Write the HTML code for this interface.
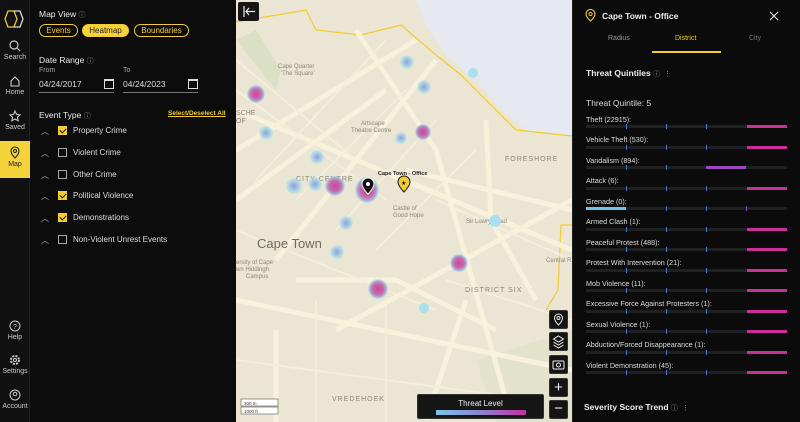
<!DOCTYPE html>
<html><head><meta charset="utf-8"><style>
*{box-sizing:border-box;margin:0;padding:0}
body{width:800px;height:422px;overflow:hidden;background:#0b0b0b;font-family:"Liberation Sans",sans-serif;color:#ddd;position:relative}
.abs{position:absolute}
.nav{left:0;top:0;width:30px;height:422px;background:#111;border-right:1px solid #222}
.ni{position:absolute;left:0;width:30px;text-align:center;font-size:7px;color:#ccc}
.panel{left:30px;top:0;width:206px;height:422px;background:#0c0c0c}
.t{font-size:8.5px;color:#eee}
.pill{position:absolute;top:24px;height:13px;border:1px solid #f2cc30;border-radius:7px;font-size:8px;color:#f2cc30;text-align:center;line-height:11px}
.cb{position:absolute;width:9px;height:9px;border:1px solid #aaa;left:58px}
.cb.on{background:#f2cc30;border-color:#f2cc30}
.cb.on:after{content:"";position:absolute;left:2px;top:0px;width:3px;height:5px;border:solid #111;border-width:0 1px 1px 0;transform:rotate(45deg)}
.car{position:absolute;left:41px;font-size:8px;color:#bbb}
.el{position:absolute;left:73px;font-size:8px;color:#ddd}
.right{left:572px;top:0;width:228px;height:422px;background:#0b0b0b;border-left:1px solid #222}
.lab{position:absolute;left:586px;font-size:7.2px;color:#ddd}
.bar{position:absolute;left:586px;width:201px;height:3px;background:#1e2124}
.bar i{position:absolute;top:-1px;width:1px;height:5px;background:#4a78c8}
.bar b{position:absolute;top:0;height:3px;left:161px;width:40px;background:#cc2f9a}
.ctl{position:absolute;left:549px;width:19px;height:19px;background:#141414;border-radius:2px;border:1px solid #333}
</style></head><body>
<div class="abs nav">
 <svg class="abs" style="left:4px;top:10px" width="22" height="18" viewBox="0 0 22 18"><path d="M4 1h6l3 8-3 8H4L1 9z" fill="none" stroke="#f2cc30" stroke-width="1.3"/><path d="M10 1h6l3 8-3 8h-6" fill="none" stroke="#ddd" stroke-width="1.3"/></svg>
 <div class="ni" style="top:40px"><svg width="12" height="12"><circle cx="5" cy="5" r="4" fill="none" stroke="#ccc" stroke-width="1.2"/><path d="M8 8l3 3" stroke="#ccc" stroke-width="1.2"/></svg><br>Search</div>
 <div class="ni" style="top:75px"><svg width="12" height="12"><path d="M2 6L6 2l4 4v5H2z" fill="none" stroke="#ccc" stroke-width="1.1"/></svg><br>Home</div>
 <div class="ni" style="top:110px"><svg width="12" height="12"><path d="M6 1l1.5 3.5 3.7.3-2.8 2.4.9 3.6L6 9 2.7 10.8l.9-3.6L.8 4.8l3.7-.3z" fill="none" stroke="#ccc" stroke-width="1"/></svg><br>Saved</div>
 <div class="ni" style="top:141px;height:37px;background:#f5d33a;color:#222;padding-top:5px"><svg width="12" height="13"><path d="M6 12s-4-4-4-7a4 4 0 018 0c0 3-4 7-4 7z" fill="none" stroke="#222" stroke-width="1.1"/><circle cx="6" cy="5" r="1.5" fill="none" stroke="#222"/></svg><br>Map</div>
 <div class="ni" style="top:320px"><svg width="12" height="12"><circle cx="6" cy="6" r="5" fill="none" stroke="#ccc"/><text x="4" y="9" font-size="7" fill="#ccc">?</text></svg><br>Help</div>
 <div class="ni" style="top:354px"><svg width="12" height="12"><circle cx="6" cy="6" r="4" fill="none" stroke="#ccc" stroke-width="2" stroke-dasharray="2 1.2"/><circle cx="6" cy="6" r="1.5" fill="none" stroke="#ccc"/></svg><br>Settings</div>
 <div class="ni" style="top:389px"><svg width="12" height="12"><circle cx="6" cy="6" r="5" fill="none" stroke="#ccc"/><circle cx="6" cy="5" r="1.8" fill="none" stroke="#ccc"/></svg><br>Account</div>
</div>
<div class="abs panel"></div>
<div class="abs t" style="left:39px;top:9px">Map View <span style="color:#999;font-size:7px">ⓘ</span></div>
<div class="pill" style="left:39px;width:39px">Events</div>
<div class="pill" style="left:82px;width:47px;background:#f5d33a;color:#222">Heatmap</div>
<div class="pill" style="left:134px;width:55px">Boundaries</div>
<div class="abs t" style="left:39px;top:55px">Date Range <span style="color:#999;font-size:7px">ⓘ</span></div>
<div class="abs" style="left:39px;top:67px;font-size:7px;color:#aaa">From</div>
<div class="abs" style="left:123px;top:67px;font-size:7px;color:#aaa">To</div>
<div class="abs" style="left:39px;top:79px;width:75px;height:14px;border-bottom:1px solid #777;font-size:8.5px;color:#ddd">04/24/2017</div>
<div class="abs" style="left:123px;top:79px;width:75px;height:14px;border-bottom:1px solid #777;font-size:8.5px;color:#ddd">04/24/2023</div>
<div class="abs" style="left:104px;top:79px;width:10px;height:10px;border:1.5px solid #ddd;border-top-width:2.5px"></div>
<div class="abs" style="left:188px;top:79px;width:10px;height:10px;border:1.5px solid #ddd;border-top-width:2.5px"></div>
<div class="abs t" style="left:39px;top:110px">Event Type <span style="color:#999;font-size:7px">ⓘ</span></div>
<div class="abs" style="left:168px;top:110px;font-size:6.5px;color:#f2cc30;text-decoration:underline;font-weight:bold">Select/Deselect All</div>
<div class="car" style="top:126px">︿</div><div class="cb on" style="top:126px"></div><div class="el" style="top:126px">Property Crime</div>
<div class="car" style="top:148px">︿</div><div class="cb" style="top:148px"></div><div class="el" style="top:148px">Violent Crime</div>
<div class="car" style="top:170px">︿</div><div class="cb" style="top:170px"></div><div class="el" style="top:170px">Other Crime</div>
<div class="car" style="top:191px">︿</div><div class="cb on" style="top:191px"></div><div class="el" style="top:191px">Political Violence</div>
<div class="car" style="top:213px">︿</div><div class="cb on" style="top:213px"></div><div class="el" style="top:213px">Demonstrations</div>
<div class="car" style="top:235px">︿</div><div class="cb" style="top:235px"></div><div class="el" style="top:235px">Non-Violent Unrest Events</div>

<svg class="abs" style="left:236px;top:0" width="336" height="422" viewBox="0 0 336 422">
<defs>
<radialGradient id="hp"><stop offset="0" stop-color="#c44a9a"/><stop offset=".55" stop-color="#c86aa8"/><stop offset=".8" stop-color="#a8a8d8"/><stop offset="1" stop-color="#9fd8ea" stop-opacity=".4"/></radialGradient>
<radialGradient id="hb"><stop offset="0" stop-color="#9a9cd4"/><stop offset=".6" stop-color="#a8cfe6"/><stop offset="1" stop-color="#a6e0ee" stop-opacity=".4"/></radialGradient>
</defs>
<rect width="336" height="422" fill="#ebe5d3"/>
<path d="M180 0L336 0 336 135 290 130 265 110 240 80 210 55 190 25z" fill="#e6e9ef"/>
<path d="M0 40 L40 90 L45 70 L20 30z" fill="#dbe0c4"/>
<path d="M240 360 L336 330 336 422 260 422z" fill="#dfe3c8" opacity=".7"/>
<path d="M0 22 L70 10 L80 30 L125 35 L165 25 L200 55 L225 75 L255 105 L280 130 L336 136" fill="none" stroke="#f2cc30" stroke-width="1.2"/>
<path d="M336 225 L325 225 L322 290 L310 310" fill="none" stroke="#f2cc30" stroke-width="1.2"/>
<g stroke="#f8f2dc" stroke-width="5" fill="none">
<path d="M0 110 L336 250"/><path d="M40 260 L200 60"/><path d="M0 200 L150 90"/><path d="M100 330 L336 200"/>
<path d="M0 300 L336 370"/><path d="M170 170 L336 210"/><path d="M120 30 L200 150 L270 400"/><path d="M250 120 L255 220 L300 300"/>
<path d="M0 150 L180 40"/><path d="M60 280 L160 280 L260 330"/><path d="M40 330 L40 422"/><path d="M190 420 L230 300"/>
</g>
<g stroke="#f4eedb" stroke-width="1.8" fill="none">
<path d="M0 60 L120 160"/><path d="M0 90 L150 200"/><path d="M20 180 L150 40"/><path d="M60 200 L170 90"/><path d="M100 230 L200 120"/><path d="M140 250 L240 150"/>
<path d="M0 230 L200 310"/><path d="M0 360 L300 400"/><path d="M80 300 L80 422"/><path d="M150 300 L150 422"/><path d="M200 200 L336 260"/><path d="M210 280 L336 320"/>
</g>
<g font-family="Liberation Sans" fill="#8b8678" font-size="6">
<text x="42" y="68">Cape Quarter</text><text x="45" y="75">'The Square'</text>
<text x="125" y="125">Artscape</text><text x="115" y="132">Theatre Centre</text>
<text x="269" y="161" font-size="7" letter-spacing="1">FORESHORE</text>
<text x="60" y="181" font-size="7" letter-spacing="1">CITY CENTRE</text>
<text x="157" y="210">Castle of</text><text x="157" y="217">Good Hope</text>
<text x="230" y="223">Sir Lowry Road</text>
<text x="21" y="248" font-size="13" fill="#6e6a5e">Cape Town</text>
<text x="0" y="264">ersity of Cape</text><text x="0" y="271">wn Hiddingh</text><text x="10" y="278">Campus</text>
<text x="229" y="292" font-size="7" letter-spacing="1">DISTRICT SIX</text>
<text x="96" y="401" font-size="7" letter-spacing="1">VREDEHOEK</text>
<text x="310" y="262">Central R</text>
<text x="0" y="115" font-size="7">SCHE</text><text x="0" y="123" font-size="7">OF</text>
</g>
<g>
<circle cx="20" cy="94" r="9" fill="url(#hp)"/><circle cx="171" cy="62" r="7" fill="url(#hb)"/><circle cx="188" cy="87" r="7" fill="url(#hb)"/>
<circle cx="237" cy="73" r="5" fill="#a8e0f0"/><circle cx="30" cy="133" r="7" fill="url(#hb)"/><circle cx="165" cy="138" r="6" fill="url(#hb)"/>
<circle cx="187" cy="132" r="8" fill="url(#hp)"/><circle cx="81" cy="157" r="7" fill="url(#hb)"/><circle cx="58" cy="186" r="8" fill="url(#hb)"/>
<circle cx="79" cy="184" r="7" fill="url(#hb)"/><circle cx="99" cy="186" r="10" fill="url(#hp)"/><ellipse cx="131" cy="190" rx="12" ry="13" fill="url(#hp)"/>
<circle cx="110" cy="223" r="7" fill="url(#hb)"/><circle cx="101" cy="252" r="7" fill="url(#hb)"/><circle cx="259" cy="221" r="6" fill="#a8e0f0"/>
<circle cx="223" cy="263" r="9" fill="url(#hp)"/><circle cx="142" cy="289" r="10" fill="url(#hp)"/><circle cx="188" cy="308" r="5" fill="#a8e0f0"/>
</g>
<path d="M132 194s-6-6-6-10a6 6 0 0112 0c0 4-6 10-6 10z" fill="#111" stroke="#fff" stroke-width="1"/><circle cx="132" cy="184" r="2" fill="#fff"/>
<path d="M168 192s-6-6-6-10a6 6 0 0112 0c0 4-6 10-6 10z" fill="#f2cc30" stroke="#111" stroke-width="1"/><text x="165" y="185" font-size="6" fill="#111">★</text>
<text x="142" y="175" font-family="Liberation Sans" font-size="5.5" font-weight="bold" fill="#222">Cape Town - Office</text>
<rect x="2" y="2" width="21" height="19" rx="2" fill="#161616"/><path d="M8 6v11M19 11.5H10M13 8l-3 3.5 3 3.5" stroke="#eee" stroke-width="1.2" fill="none"/>
<rect x="5" y="399" width="37" height="7" fill="#fff" stroke="#555" stroke-width=".6"/><text x="8" y="405" font-size="4.5" fill="#333">300 m</text>
<rect x="5" y="407" width="37" height="7" fill="#fff" stroke="#555" stroke-width=".6"/><text x="8" y="413" font-size="4.5" fill="#333">1000 ft</text>
</svg>
<div class="ctl" style="top:310px"><svg width="17" height="17"><path d="M8.5 14s-4-4-4-7a4 4 0 018 0c0 3-4 7-4 7z" fill="none" stroke="#eee"/><circle cx="8.5" cy="7" r="1.5" fill="none" stroke="#eee"/></svg></div>
<div class="ctl" style="top:332px"><svg width="17" height="17"><path d="M8.5 3l5 3-5 3-5-3zM3.5 9l5 3 5-3M3.5 12l5 3 5-3" fill="none" stroke="#eee"/></svg></div>
<div class="ctl" style="top:355px"><svg width="17" height="17"><rect x="3" y="5" width="11" height="8" rx="1" fill="none" stroke="#eee"/><circle cx="8.5" cy="9" r="2" fill="none" stroke="#eee"/></svg></div>
<div class="ctl" style="top:378px;color:#eee;font-size:15px;text-align:center;line-height:17px">+</div>
<div class="ctl" style="top:400px;color:#eee;font-size:15px;text-align:center;line-height:15px">−</div>
<div class="abs" style="left:417px;top:394px;width:127px;height:25px;background:#151515;border-radius:2px;border:1px solid #333"></div>
<div class="abs" style="left:417px;top:399px;width:127px;text-align:center;font-size:8px;color:#eee">Threat Level</div>
<div class="abs" style="left:436px;top:410px;width:90px;height:5px;background:linear-gradient(90deg,#7bc4ea,#8a82cf,#c430a0)"></div>

<div class="abs right"></div>
<svg class="abs" style="left:585px;top:9px" width="11" height="13"><path d="M5.5 12s-4.5-4-4.5-7a4.5 4.5 0 019 0c0 3-4.5 7-4.5 7z" fill="none" stroke="#f2cc30" stroke-width="1.1"/><circle cx="5.5" cy="5" r="1.6" fill="none" stroke="#f2cc30"/></svg>
<div class="abs" style="left:602px;top:11px;font-size:8.5px;color:#eee;font-weight:bold">Cape Town - Office</div>
<svg class="abs" style="left:769px;top:11px" width="10" height="10"><path d="M1 1l8 8M9 1l-8 8" stroke="#ddd" stroke-width="1.2"/></svg>
<div class="abs" style="left:608px;top:35px;font-size:7px;color:#999">Radius</div>
<div class="abs" style="left:675px;top:35px;font-size:7px;color:#f2cc30">District</div>
<div class="abs" style="left:749px;top:35px;font-size:7px;color:#777">City</div>
<div class="abs" style="left:652px;top:51px;width:69px;height:1.5px;background:#f2cc30"></div>
<div class="abs" style="left:586px;top:68px;font-size:8.5px;color:#eee;font-weight:bold">Threat Quintiles <span style="color:#999;font-size:7px;font-weight:normal">ⓘ &nbsp;⋮</span></div>
<div class="abs" style="left:586px;top:98px;font-size:8.5px;color:#ddd">Threat Quintile: 5</div>
<div class="lab" style="top:115px">Theft (22915):</div><div class="bar" style="top:125px"><i style="left:40px"></i><i style="left:80px"></i><i style="left:120px"></i><b></b></div>
<div class="lab" style="top:135px">Vehicle Theft (530):</div><div class="bar" style="top:146px"><i style="left:40px"></i><i style="left:80px"></i><i style="left:120px"></i><b></b></div>
<div class="lab" style="top:156px">Vandalism (894):</div><div class="bar" style="top:166px"><i style="left:40px"></i><i style="left:80px"></i><b style="left:120px;background:#9d48c0"></b></div>
<div class="lab" style="top:176px">Attack (6):</div><div class="bar" style="top:187px"><i style="left:40px"></i><i style="left:80px"></i><i style="left:120px"></i><b></b></div>
<div class="lab" style="top:197px">Grenade (0):</div><div class="bar" style="top:207px"><b style="left:0;background:#72c0ec"></b><i style="left:80px"></i><i style="left:120px"></i><i style="left:160px;background:#8a4ac0"></i></div>
<div class="lab" style="top:217px">Armed Clash (1):</div><div class="bar" style="top:228px"><i style="left:40px"></i><i style="left:80px"></i><i style="left:120px"></i><b></b></div>
<div class="lab" style="top:238px">Peaceful Protest (488):</div><div class="bar" style="top:248px"><i style="left:40px"></i><i style="left:80px"></i><i style="left:120px"></i><b></b></div>
<div class="lab" style="top:258px">Protest With Intervention (21):</div><div class="bar" style="top:269px"><i style="left:40px"></i><i style="left:80px"></i><i style="left:120px"></i><b></b></div>
<div class="lab" style="top:279px">Mob Violence (11):</div><div class="bar" style="top:289px"><i style="left:40px"></i><i style="left:80px"></i><i style="left:120px"></i><b></b></div>
<div class="lab" style="top:299px">Excessive Force Against Protesters (1):</div><div class="bar" style="top:310px"><i style="left:40px"></i><i style="left:80px"></i><i style="left:120px"></i><b></b></div>
<div class="lab" style="top:320px">Sexual Violence (1):</div><div class="bar" style="top:330px"><i style="left:40px"></i><i style="left:80px"></i><i style="left:120px"></i><b></b></div>
<div class="lab" style="top:340px">Abduction/Forced Disappearance (1):</div><div class="bar" style="top:351px"><i style="left:40px"></i><i style="left:80px"></i><i style="left:120px"></i><b></b></div>
<div class="lab" style="top:361px">Violent Demonstration (45):</div><div class="bar" style="top:371px"><i style="left:40px"></i><i style="left:80px"></i><i style="left:120px"></i><b></b></div>
<div class="abs" style="left:584px;top:402px;font-size:8.5px;color:#eee;font-weight:bold">Severity Score Trend <span style="color:#999;font-size:7px;font-weight:normal">ⓘ &nbsp;⋮</span></div>
</body></html>
